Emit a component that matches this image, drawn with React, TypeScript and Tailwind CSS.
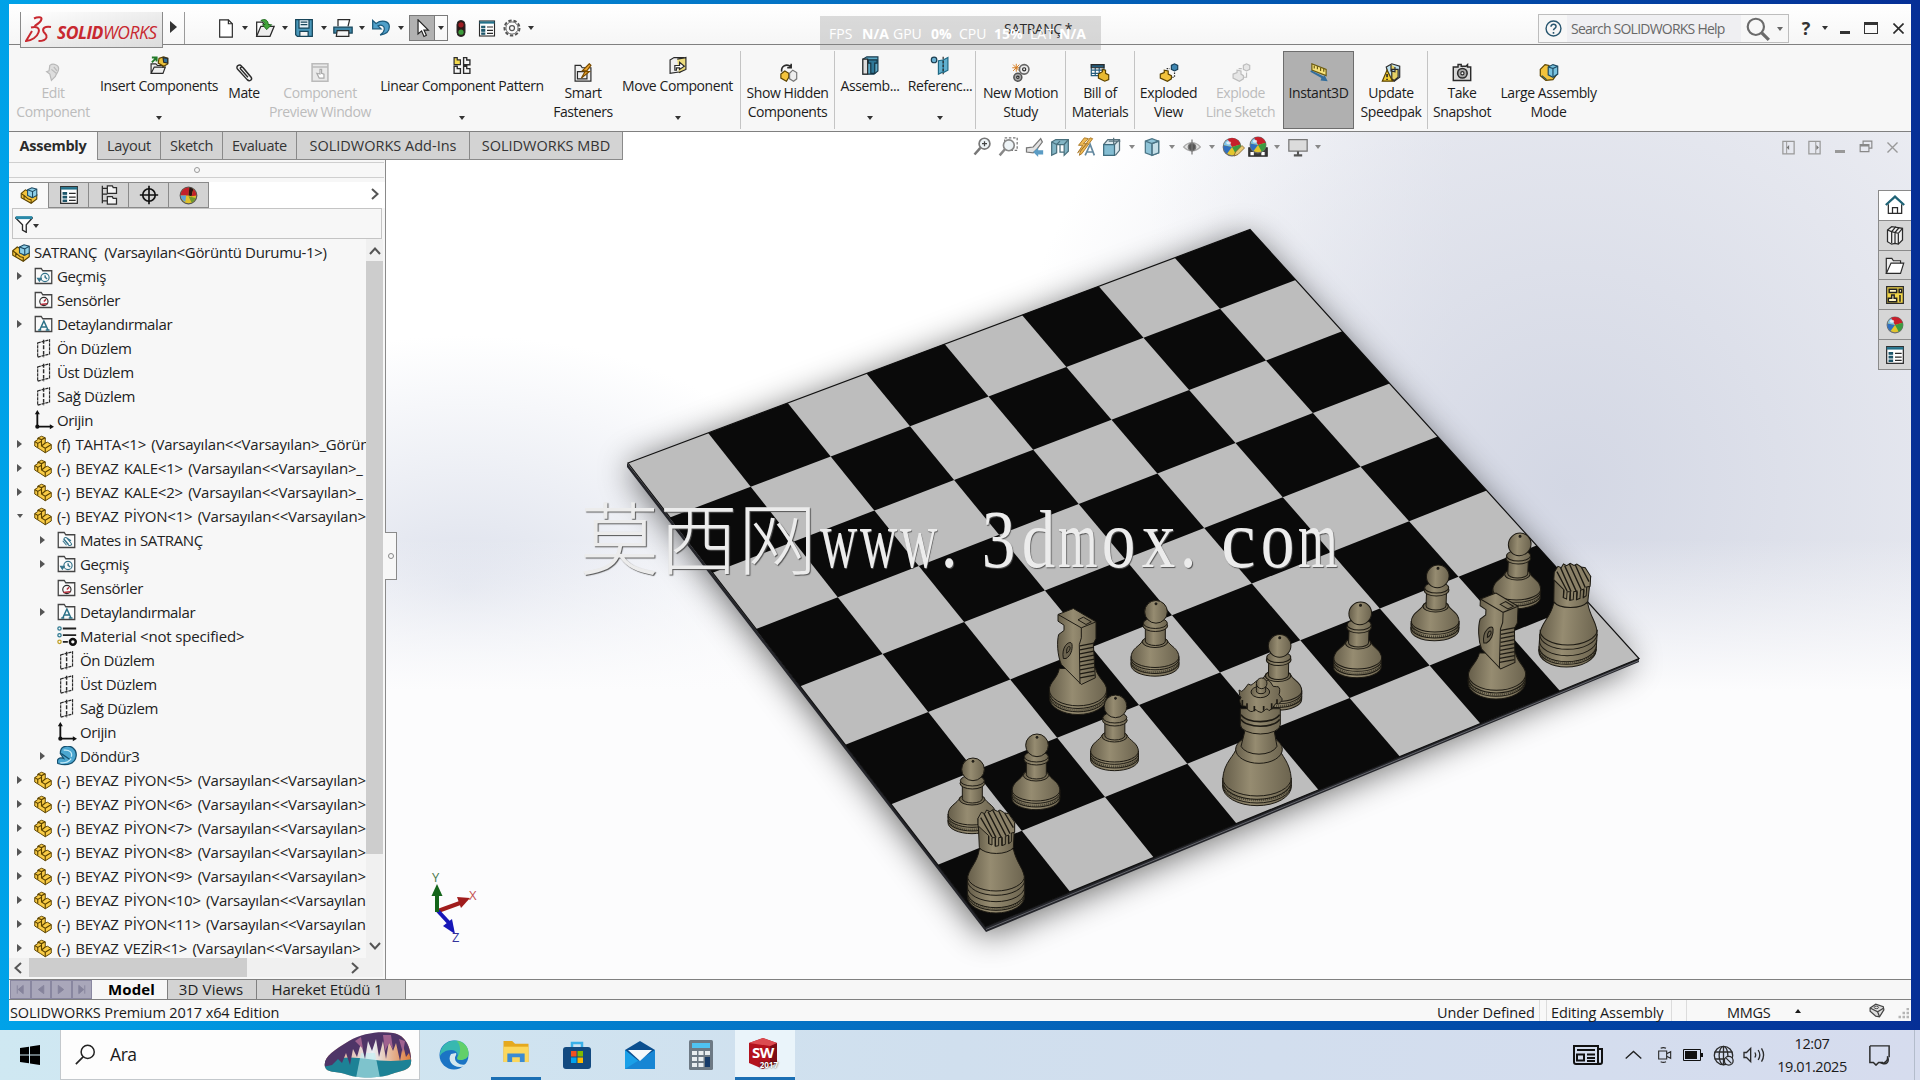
import type { ReactNode } from "react";
import clsx from "clsx";

type Pt = [number, number];

const Svg = ({ children, className = "size-5", box = "0 0 24 24" }: { children: ReactNode; className?: string; box?: string }) => (
  <svg viewBox={box} className={clsx("shrink-0", className)} fill="none" stroke="#2b2b2b" strokeWidth="1.5">
    {children}
  </svg>
);

const Caret = ({ className = "text-[#333]" }: { className?: string }) => (
  <svg viewBox="0 0 6 4" className={clsx("h-1 w-1.5 shrink-0", className)}>
    <path d="M0 0h6L3 4z" fill="currentColor" />
  </svg>
);

/* ---------- small icons ---------- */

const PartIcon = () => (
  <Svg className="h-[19px] w-[18px]">
    <path d="M1 8l4-2.500V3.500L10 1l5 2v7l3-1 5 3v6l-8 5-6-4-8-5z" fill="#f9cb45" stroke="#5b4300" strokeWidth="1.300" />
    <path d="M1 8l4 2.500 5-3V5.500L5 3.500M10 5.500L15 3M10 8v6l5 3v6M15 17l8-5M10 14l5-4M5 10.500V16" stroke="#5b4300" />
  </Svg>
);

const AssemblyIcon = ({ className }: { className?: string }) => (
  <Svg className={className}>
    <path d="M1 9l6-5 4 2v5l5 4 7-4v6l-8 6-14-8z" fill="#f3c33c" stroke="#5b4300" />
    <path d="M1 9l4 3v5M5 12l6 5 4 1v5" stroke="#5b4300" />
    <path d="M10 4l6-3 7 2v9l-6 3-7-3z" fill="#8ecfe8" stroke="#1d4a63" />
    <path d="M10 4l7 2.500V15M17 6.500L23 3" stroke="#1d4a63" />
  </Svg>
);

const FolderFrame = ({ children }: { children: ReactNode }) => (
  <Svg className="h-[18px] w-[19px]">
    <path d="M1 22V2h8l2 3h12v17z" fill="#fafafa" stroke="#444" strokeWidth="1.700" />
    {children}
  </Svg>
);

const HistoryIcon = () => (
  <FolderFrame>
    <circle cx="14" cy="14" r="5.500" stroke="#33738a" />
    <path d="M4 15h5l-2.500 4zM14 11v3l3 2" fill="#33738a" stroke="#33738a" />
  </FolderFrame>
);
const SensorIcon = () => (
  <FolderFrame>
    <circle cx="12.500" cy="14" r="5.500" />
    <path d="M12.500 14l3-3M8 18l9-1" stroke="#b22d3a" strokeWidth="2" />
  </FolderFrame>
);
const NotesIcon = () => (
  <FolderFrame>
    <path d="M7 20l5.500-12L18 20M9 16h7M5 20h4M15 20h5" stroke="#2b7187" strokeWidth="2" />
  </FolderFrame>
);
const MatesIcon = () => (
  <FolderFrame>
    <path d="M8 11l7 8c3 1 5-1 3-3l-6-7c-2-1-4 1-3 2l6 7M7 13l5 6M12 9l6 4" stroke="#33738a" strokeWidth="1.400" />
  </FolderFrame>
);
const PlaneIcon = () => (
  <Svg className="h-[19px] w-5">
    <path d="M4 5l15-4v18L4 23z" strokeDasharray="4 1" />
    <path d="M11.500 1v22" strokeDasharray="5 2" strokeWidth="1.800" />
  </Svg>
);
const OriginIcon = () => (
  <Svg>
    <path d="M4 3v17h17" strokeWidth="2.200" stroke="#111" />
    <path d="M4 0l3 5H1zM24 20l-5 3v-6z" fill="#111" stroke="none" />
    <circle cx="4" cy="20" r="2.500" fill="#111" stroke="none" />
  </Svg>
);
const MaterialIcon = () => (
  <Svg>
    <circle cx="3" cy="3" r="2" stroke="#2c7890" />
    <circle cx="3" cy="11" r="2" stroke="#2c7890" />
    <circle cx="3" cy="19" r="2" stroke="#c2a025" />
    <path d="M7 3h16M7 11h16M7 19h6" stroke="#222" strokeWidth="2.200" />
    <circle cx="19" cy="19" r="3.500" strokeWidth="3" stroke="#111" />
  </Svg>
);
const RevolveIcon = () => (
  <Svg>
    <path d="M8 1c9-3 16 3 15 11S14 25 1 21c-2-5 2-8 7-6L4 9c0-4 1-7 4-8z" fill="#4ba6d0" stroke="#15506f" />
    <path d="M8 5c7-1 11 3 9 8M4 20c6 1 10-1 13-5" stroke="#c6ebf8" />
    <path d="M5 9l10 7" stroke="#15506f" />
  </Svg>
);

const BallIcon = ({ className = "size-5" }: { className?: string }) => (
  <Svg className={className}>
    <circle cx="12" cy="12" r="10.500" fill="#e3c62d" stroke="#6e6e6e" />
    <path d="M12 12L6 3.500A10 10 0 0 1 22 9z" fill="#c8202c" stroke="none" />
    <path d="M12 12L2 9.500A10 10 0 0 1 7 3z" fill="#7fc4e8" stroke="none" />
    <path d="M12 12l10-3a10 10 0 0 1-5 12z" fill="#3c9b42" stroke="none" />
    <path d="M12 12L2 10a10 10 0 0 0 4 10z" fill="#2f6fc0" stroke="none" />
    <ellipse cx="8" cy="7" rx="3" ry="2" fill="#fff" opacity=".7" stroke="none" />
  </Svg>
);

// Property-manager flavour of the ball: red top, yellow base, dark wedge.
const DisplayBall = () => (
  <Svg className="size-[19px]">
    <circle cx="12" cy="12" r="10.500" fill="#e0c12b" stroke="#555" />
    <path d="M12 12L2 12A10 10 0 0 1 13 2z" fill="#c2202a" stroke="none" />
    <path d="M13 2a10 10 0 0 1 5 2l-2 9-4-1z" fill="#2b1414" stroke="none" />
    <path d="M18 4a10 10 0 0 1 4 8l-6 1z" fill="#c2202a" stroke="none" />
    <path d="M2 12h7l-1 8a10 10 0 0 1-6-8z" fill="#5aa3d6" stroke="none" />
    <path d="M12 13l9 2a10 10 0 0 1-5 6z" fill="#6f9a2f" stroke="none" />
  </Svg>
);

const ListIcon = ({ className = "size-5" }: { className?: string }) => (
  <Svg className={className}>
    <rect x="2" y="2" width="20" height="20" fill="#fff" />
    <path d="M2 4h20" stroke="#23718a" strokeWidth="3" />
    <path d="M5 9h4v2H5zM5 13.500h4v2H5zM5 18h4v1.500H5z" fill="#23718a" stroke="#1d5468" />
    <path d="M12 10h8M12 14.500h8M12 18.500h8" />
  </Svg>
);

const TreeIcon = () => (
  <Svg>
    <path d="M4 1v21M4 4h6M4 19h6M4 11h6" />
    <path d="M10 1h6l1 2h4v7h-11zM10 14h6l1 2h4v7H10z" fill="#f4f4f4" />
  </Svg>
);
const TargetIcon = () => (
  <Svg>
    <circle cx="12" cy="12" r="7.500" strokeWidth="2" stroke="#111" />
    <path d="M12 1v22M1 12h22" strokeWidth="2" stroke="#111" />
  </Svg>
);

const Magnifier = ({ className, color = "#555" }: { className?: string; color?: string }) => (
  <Svg className={className}>
    <circle cx="10" cy="10" r="7.500" stroke={color} strokeWidth="2" />
    <path d="M15.500 15.500L22 22" stroke={color} strokeWidth="3" />
  </Svg>
);

/* ---------- title bar ---------- */

const NewDoc = () => (
  <Svg className="h-[19px] w-5">
    <path d="M4 1h11l5 5v17H4z" fill="#fff" />
    <path d="M15 1v5h5" />
  </Svg>
);
const OpenDoc = () => (
  <Svg>
    <path d="M2 22V5h7l2 3h6v3" fill="#fff" />
    <path d="M2 22L7 10h16l-5 12z" fill="#eee" />
    <path d="M7 3c5-3 9 0 9 5h4l-6 6-5-6h3c0-3-2-4-5-5z" fill="#43a63b" stroke="#1c651b" strokeWidth="1" />
  </Svg>
);
const SaveDoc = () => (
  <Svg>
    <path d="M2 2h20v20H4l-2-2z" fill="#4a98bb" stroke="#17455a" />
    <path d="M6 2h12v10H6z" fill="#e8f3f8" stroke="#17455a" />
    <path d="M8 5h8M8 8h8" stroke="#17455a" />
    <path d="M7 16h10v6H7z" fill="#f4f4f4" stroke="#17455a" />
  </Svg>
);
const PrintDoc = () => (
  <Svg>
    <path d="M6 10V2h14l-2 8" fill="#fff" />
    <path d="M1 11h22v7H1z" fill="#3f87a8" stroke="#17455a" />
    <path d="M5 15h14v7H4z" fill="#f6f6f6" />
  </Svg>
);
const UndoIcon = () => (
  <Svg>
    <path d="M2 3v10h10L8.500 9.500c4-2 8 0 7.500 4-.3 3-2 5-5 7 7-1 11-5 11-10 0-7-9-9-16-4z" fill="#4f9fc9" stroke="#1c5a7c" />
  </Svg>
);
const TrafficIcon = () => (
  <Svg className="h-[19px] w-4">
    <rect x="6" y="0" width="12" height="24" rx="6" fill="#2a1717" />
    <circle cx="12" cy="6.500" r="4" fill="#9b1c22" stroke="none" />
    <circle cx="12" cy="17.500" r="4" fill="#3b9c3b" stroke="none" />
  </Svg>
);
const GearIcon = () => (
  <Svg>
    <circle cx="12" cy="12" r="9" strokeDasharray="4 2.280" strokeWidth="2.400" stroke="#555" />
    <circle cx="12" cy="12" r="7.300" stroke="#555" strokeWidth="1" />
    <circle cx="12" cy="12" r="3" stroke="#555" />
  </Svg>
);

const Logo = () => (
  <div className="flex h-9 w-[143px] items-center self-start border-x border-b border-[#8a8a8a] bg-linear-to-br from-white to-[#dcdcdc] pl-1">
    <svg viewBox="0 0 27 27" className="h-[27px] w-[27px] shrink-0" fill="none" stroke="#c8282f" strokeWidth="2">
      <path d="M9 2.500c4-2 8-1.500 7.500.5C16 6 13 8 9.500 10" />
      <path d="M6 11.500c6-1.500 9 .5 7.500 5C12 21 7 24.500 1 25L7 15" />
      <path d="M26 11c-6-1-9 1-7.500 4.500 1 2 4 3 3 6-.8 2.500-4 3.500-8 3.500" />
    </svg>
    <span className="mt-[5px] ml-[5px] text-[17.5px] tracking-[-0.03em] text-[#c8282f] italic">
      <b>SOLID</b>WORKS
    </span>
  </div>
);

const Cell = ({ w, children, className }: { w: string; children?: ReactNode; className?: string }) => (
  <div className={clsx("flex shrink-0 items-center justify-center", w, className)}>{children}</div>
);

const TitleBar = () => (
  <div className="relative flex h-[41px] shrink-0 items-center border-b border-[#808080] bg-linear-to-b from-white to-[#f6f6f6] pt-2">
    <div className="ml-[11px] flex h-full items-center">
      <Logo />
      <Cell w="w-[22px]" className="h-full border-r border-[#9a9a9a] pb-0.5">
        <svg viewBox="0 0 7 12" className="h-3 w-[7px]"><path d="M0 0l7 6-7 6z" fill="#333" /></svg>
      </Cell>
    </div>
    <div className="ml-[31px] flex h-[26px] items-center self-start pt-1.5">
      <Cell w="w-5"><NewDoc /></Cell>
      <Cell w="w-[18px]"><Caret /></Cell>
      <Cell w="w-[22px]"><OpenDoc /></Cell>
      <Cell w="w-[17px]"><Caret /></Cell>
      <Cell w="w-[22px]"><SaveDoc /></Cell>
      <Cell w="w-[17px]"><Caret /></Cell>
      <Cell w="w-[22px]"><PrintDoc /></Cell>
      <Cell w="w-4"><Caret /></Cell>
      <Cell w="w-[22px]"><UndoIcon /></Cell>
      <Cell w="w-[17px]"><Caret /></Cell>
      <Cell w="w-[26px]" className="h-[26px] border border-[#7b7b7b] bg-[#b1b1b1]">
        <Svg className="h-[19px] w-5"><path d="M7 1v18l4.500-4 3 7 3-1.500-3-6.500h5.500z" fill="#fff" stroke="#222" /></Svg>
      </Cell>
      <Cell w="w-[13px]" className="h-[26px] border-y border-r border-[#7b7b7b]"><Caret /></Cell>
      <Cell w="w-[26px]"><TrafficIcon /></Cell>
      <Cell w="w-[26px]"><ListIcon className="h-[19px] w-[18px]" /></Cell>
      <Cell w="w-6"><GearIcon /></Cell>
      <Cell w="w-[14px]"><Caret /></Cell>
    </div>
    <span className="ml-[466px] text-[14px] tracking-[-0.035em] whitespace-nowrap text-black">SATRANÇ *</span>
    <div className="absolute top-3 left-[811px] flex h-[34px] w-[281px] items-center bg-[#8c8c8c]/30 pl-[9px] text-[14px] whitespace-nowrap text-white">
      <span className="w-[33px]">FPS</span>
      <b className="w-[31px]">N/A</b>
      <span className="w-[38px]">GPU</span>
      <b className="w-[28px]">0%</b>
      <span className="w-[35px]">CPU</span>
      <b className="w-[36px]">15%</b>
      <span className="w-[29px]">LAT</span>
      <b>N/A</b>
    </div>
    <div className="mt-[2px] mr-[6px] ml-auto flex h-[29px] w-[251px] items-center self-start border border-[#bdbdbd] bg-[#f7f7f7]">
      <Cell w="w-[28px]">
        <Svg className="size-[17px]">
          <circle cx="12" cy="12" r="10.500" stroke="#28566f" strokeWidth="2" />
          <path d="M8.500 9.500c0-5 7.500-4.500 7 0-.3 2.500-3.500 2-3.500 5M12 17v2.500" stroke="#28566f" strokeWidth="2.200" />
        </Svg>
      </Cell>
      <span className="flex h-full w-[174px] items-center bg-[#efeff2] pl-1 text-[14px] tracking-[-0.055em] whitespace-nowrap text-[#686868]">Search SOLIDWORKS Help</span>
      <Cell w="w-[34px]"><Magnifier className="size-[26px]" color="#6b6b6b" /></Cell>
      <Caret className="ml-0.5 text-[#666]" />
    </div>
    <div className="flex h-[29px] items-center">
      <Cell w="w-[22px]" className="text-[18px] font-bold text-[#333]">?</Cell>
      <Cell w="w-4"><Caret /></Cell>
      <Cell w="w-6" className="pt-2"><i className="h-[3px] w-[10px] bg-[#333]" /></Cell>
      <Cell w="w-[28px]"><i className="h-3 w-[14px] border border-t-3 border-[#333]" /></Cell>
      <Cell w="w-[26px]"><Svg className="size-[11px]"><path d="M1 1l22 22M23 1L1 23" strokeWidth="3.500" /></Svg></Cell>
    </div>
  </div>
);

/* ---------- ribbon ---------- */

const ribbonIcons: Record<string, ReactNode> = {
  edit: <path d="M8 3c4-3 12-1 11 5 0 4-3 5-4 9l-5 5-2-8-4-3 3-1zM10 8l6 5M13 5l4 5" fill="#ddd" stroke="#b9b9b9" />,
  insert: (
    <>
      <path d="M2 22V10h6l2 2h7v3M2 22l4-8h14l-3 8z" fill="#eee" />
      <path d="M3 8l5-5M3 2h6v5" stroke="#227a2a" strokeWidth="2.500" />
      <path d="M12 3l6-2 5 2v7l-5 3-7-4z" fill="#eac03a" stroke="#5b4300" />
      <path d="M17 2l6 1v6l-5-1z" fill="#2e6f9a" />
    </>
  ),
  mate: <path d="M19 16L9 4C6 1 1 4 4 8l12 13c3 3 7 0 5-3L11 6C9 4 6 6 8 8l9 10" strokeWidth="1.800" />,
  preview: (
    <>
      <path d="M2 1h20v22H2zM2 5h20" fill="#e9e9e9" stroke="#bbb" strokeWidth="2" />
      <path d="M12 8v6l-4-1 3 6h6v-5l-3-1V8z" fill="#fff" stroke="#aaa" />
    </>
  ),
  linear: (
    <>
      <path d="M2 2h4v3h4v6H2z" fill="#f3d94e" stroke="#2b2b2b" />
      <path d="M14 2h4v3h4v6h-8zM2 13h4v3h4v6H2zM14 13h4v3h4v6h-8z" strokeWidth="1.700" />
    </>
  ),
  smart: (
    <>
      <path d="M2 3h7l2 3h11v17H2zM5 11h12v9H5z" fill="#f1f1f1" />
      <path d="M20 1l-9 9h4l-5 9 10-8h-4l6-8z" fill="#f2a92f" stroke="#7a4c00" />
    </>
  ),
  move: (
    <>
      <path d="M2 5l5-3h12v5l-4 13-13 2z" fill="#eee" />
      <path d="M11 4l11-2v15l-9 4" fill="#eddc7d" />
      <path d="M8 18v-6h6V8l6 5-6 4v-2h-4v3z" fill="#fff" />
    </>
  ),
  hidden: (
    <>
      <path d="M4 11c-1-7 6-11 12-6M16 1v5h-5" strokeWidth="2" />
      <path d="M3 14l5-4 5 3v5l-3 5-7-4z" fill="#f3c33c" stroke="#5b4300" />
      <path d="M14 13l4-4 5 3v8l-4 3-5-3z" fill="#eee" stroke="#777" />
    </>
  ),
  feature: (
    <>
      <path d="M3 4l5-3h14v18l-5 4H3z" fill="#5ca9c7" stroke="#1c3e50" />
      <path d="M3 4h6v19H3z" fill="#ddd" />
      <path d="M10 5h11v4h-3v13h-5V9h-3z" fill="#2f7797" stroke="#143443" />
    </>
  ),
  reference: (
    <>
      <circle cx="4.500" cy="5" r="3.500" fill="#6cb2d4" stroke="#1c3e50" />
      <path d="M10 6l6-1v15l-6 3zM16 5l6-3v16l-6 3" fill="#61b0cf" stroke="#1f6985" />
      <path d="M16 1v22" strokeDasharray="3 2" />
    </>
  ),
  motion: (
    <>
      <path d="M6 1v10M1 6h10M2 2l8 8M10 2l-8 8" stroke="#d57a1d" strokeWidth="1.200" />
      <circle cx="16" cy="8" r="6" fill="#ececec" stroke="#666" strokeWidth="2" />
      <circle cx="16" cy="8" r="2" />
      <circle cx="8" cy="18" r="5" fill="#aaa" stroke="#555" strokeWidth="2" />
      <circle cx="8" cy="18" r="1.500" fill="#fff" />
    </>
  ),
  bom: (
    <>
      <path d="M1 2h16v14H1zM1 9h16M1 13h16M6 6v10M11 6v10" fill="#fff" stroke="#245c7c" />
      <path d="M1 2h16v4H1z" fill="#245c7c" />
      <path d="M10 14l5-3V8l4 1v4l4 2v6l-5 2-8-4z" fill="#e8b931" stroke="#5b4300" />
    </>
  ),
  exploded: (
    <>
      <path d="M1 14l5-2V9l5 1v4l4 2v4l-5 3-9-4z" fill="#f3c33c" stroke="#5b4300" />
      <path d="M15 3l4-2 4 2v5l-4 2-4-2z" fill="#3f86b1" stroke="#173f58" />
      <path d="M19 12v6h-4M9 7h4" strokeDasharray="2 1.500" />
    </>
  ),
  explodeLine: (
    <>
      <path d="M2 14l5-2V9l5 1v4l3 2v4l-5 3-8-4zM15 3l4-2 4 2v5l-4 2-4-2z" fill="#e6e6e6" stroke="#bdbdbd" />
      <path d="M19 12v6h-4M9 7h4" stroke="#bdbdbd" />
    </>
  ),
  instant: (
    <>
      <path d="M3 1l18 7v8L3 9z" fill="#f7e27a" stroke="#6b5b12" />
      <path d="M6 3v4M10 4v4M14 6v4M18 7v4" stroke="#6b5b12" />
      <path d="M1 11l14 8-1 3 9 1-4-8-1 2L2 9z" fill="#336e9c" stroke="none" />
    </>
  ),
  speedpak: (
    <>
      <path d="M6 5l7-4 10 3v14l-7 5-6-3z" fill="#bfe1ef" />
      <path d="M13 8h8v10l-5 4-3-2zM12 2v8l5 1V5" fill="#e6d165" />
      <path d="M7 9l7 14H1z" fill="#f5d032" stroke="#5b4300" />
      <path d="M7 14v4M7 20v1.500" stroke="#222" strokeWidth="2" />
    </>
  ),
  snapshot: (
    <>
      <path d="M1 5h6V2h4v2h6l2-2v3h4v17H1z" fill="#d9d9d9" strokeWidth="1.800" />
      <circle cx="12.500" cy="13" r="6" fill="#aaa" strokeWidth="2" />
      <circle cx="12.500" cy="13" r="2" fill="#fff" />
    </>
  ),
  large: (
    <>
      <path d="M1 8l6-6 5 1v9l10 2-5 7-9 1-7-6z" fill="#f3c33c" stroke="#5b4300" />
      <path d="M11 5l6-3 6 2v10l-6 4-6-3z" fill="#79c3df" stroke="#1d4a63" />
      <path d="M11 5l6 2v10M17 7l6-3M3 16l6 5" stroke="#1d4a63" />
    </>
  ),
};

type Tool = { w: string; icon: string; lines: string[]; menu?: boolean; off?: boolean; sep?: boolean; active?: boolean };

const tools: Tool[] = [
  { w: "w-[88px]", icon: "edit", lines: ["Edit", "Component"], off: true },
  { w: "w-[124px]", icon: "insert", lines: ["Insert Components"], menu: true },
  { w: "w-[46px]", icon: "mate", lines: ["Mate"] },
  { w: "w-[106px]", icon: "preview", lines: ["Component", "Preview Window"], off: true },
  { w: "w-[178px]", icon: "linear", lines: ["Linear Component Pattern"], menu: true },
  { w: "w-16", icon: "smart", lines: ["Smart", "Fasteners"] },
  { w: "w-[125px]", icon: "move", lines: ["Move Component"], menu: true },
  { w: "w-[94px]", icon: "hidden", lines: ["Show Hidden", "Components"], sep: true },
  { w: "w-[71px]", icon: "feature", lines: ["Assemb..."], menu: true, sep: true },
  { w: "w-[70px]", icon: "reference", lines: ["Referenc..."], menu: true },
  { w: "w-[90px]", icon: "motion", lines: ["New Motion", "Study"], sep: true },
  { w: "w-[69px]", icon: "bom", lines: ["Bill of", "Materials"], sep: true },
  { w: "w-[68px]", icon: "exploded", lines: ["Exploded", "View"], sep: true },
  { w: "w-[77px]", icon: "explodeLine", lines: ["Explode", "Line Sketch"], off: true },
  { w: "ml-1 w-[71px]", icon: "instant", lines: ["Instant3D"], active: true },
  { w: "ml-px w-[72px]", icon: "speedpak", lines: ["Update", "Speedpak"] },
  { w: "w-[69px]", icon: "snapshot", lines: ["Take", "Snapshot"], sep: true },
  { w: "w-[105px]", icon: "large", lines: ["Large Assembly", "Mode"] },
];

const Ribbon = () => (
  <div className="flex h-[87px] shrink-0 border-b border-[#808080] bg-[#f7f7f7] pt-[6px] pb-[2px]">
    {tools.map((t) => (
      <div
        key={t.icon}
        className={clsx(
          "flex shrink-0 flex-col items-center",
          t.w,
          t.menu ? "pt-[5px]" : "pt-3",
          t.sep && "border-l border-[#c4c4c4]",
          t.active && "bg-[#b0b0b0] outline -outline-offset-1 outline-[#6d6d6d]",
        )}
      >
        <Svg className="h-[19px] w-5">{ribbonIcons[t.icon]}</Svg>
        <div className={clsx("mt-px flex flex-col items-center text-[14px] leading-[19px] tracking-[-0.03em] whitespace-nowrap", t.off ? "text-[#bcbcbc]" : "text-[#1c1c1c]")}>
          {t.lines.map((l) => (
            <span key={l}>{l}</span>
          ))}
        </div>
        {t.menu && <div className="mt-[21px]"><Caret /></div>}
      </div>
    ))}
  </div>
);

/* ---------- command tabs and heads-up toolbar ---------- */

const commandTabs: [string, string][] = [
  ["Assembly", "w-[88px]"],
  ["Layout", "w-[64px]"],
  ["Sketch", "w-[62px]"],
  ["Evaluate", "w-[74px]"],
  ["SOLIDWORKS Add-Ins", "w-[173px]"],
  ["SOLIDWORKS MBD", "w-[153px]"],
];

const Cube = () => (
  <Svg>
    <path d="M4 5l8-3 8 3v14l-8 3-8-3z" fill="#8fc4d8" stroke="#4b7586" />
    <path d="M12 8l8-3v14l-8 3z" fill="#c4dfe8" stroke="#4b7586" />
    <path d="M4 5l8 3 8-3M12 8v14" stroke="#4b7586" />
  </Svg>
);

const HeadsUp = () => (
  <div className="flex grow items-center pt-0.5">
    <div className="ml-[346px] flex items-center">
      <Cell w="w-[26px]"><Svg><circle cx="15" cy="8" r="6.500" fill="#eef4f7" stroke="#777" strokeWidth="2" /><path d="M10 13l-7 8" stroke="#777" strokeWidth="3" /><path d="M15 5v6M12 8h6" stroke="#444" /></Svg></Cell>
      <Cell w="w-[26px]"><Svg><path d="M8 1h15v15H8z" strokeDasharray="3 2" stroke="#777" /><circle cx="13" cy="10" r="6.500" fill="#eef4f7" stroke="#888" strokeWidth="2" /><path d="M8 15l-6 7" stroke="#888" strokeWidth="3" /></Svg></Cell>
      <Cell w="w-[26px]"><Svg><path d="M20 2l-9 10-8 1v5l8 1 5-5 6-8z" fill="#e3e3e3" stroke="#777" /><path d="M11 18l6-5v3h6v5h-6v3z" fill="#5b9cc4" stroke="none" /></Svg></Cell>
      <Cell w="w-[26px]"><Svg><path d="M2 6l5-3h15v14l-5 5V9H8v10l-6 3z" fill="#83b5c5" stroke="#49707d" /><path d="M2 6l6 3M8 9l4-4M17 9l5-6M12 9v9h5" stroke="#49707d" /></Svg></Cell>
      <Cell w="w-[26px]"><Svg><path d="M10 1L3 10h5l-6 9 12-11H9l6-6zM20 2L7 20l-3 2 1-4L17 1z" fill="#f0bb55" stroke="#a06c1b" strokeWidth="1" /><path d="M11 22l6-13 5 13M13 18h8" stroke="#6489a0" strokeWidth="2" /></Svg></Cell>
      <Cell w="w-[25px]"><Svg><path d="M2 9l5-6h14v13l-5 6" fill="#dbe9ee" stroke="#56717c" /><path d="M2 9h13v13H2z" fill="#84bdd2" stroke="#3e6c7e" /><path d="M15 9l6-6M14 1v8M8 5h14" stroke="#56717c" /></Svg></Cell>
      <Cell w="w-[15px]"><Caret className="text-[#888]" /></Cell>
      <Cell w="w-[26px]"><Cube /></Cell>
      <Cell w="w-[14px]"><Caret className="text-[#888]" /></Cell>
      <Cell w="w-[26px]"><Svg><path d="M2 12c6-7 14-7 20 0-6 6-14 6-20 0z" fill="#e4e4e4" stroke="#aaa" /><circle cx="12" cy="12" r="4.500" fill="#555" stroke="#777" /><path d="M12 3v18" stroke="#777" /></Svg></Cell>
      <Cell w="w-[14px]"><Caret className="text-[#888]" /></Cell>
      <Cell w="w-[26px]" className="relative">
        <BallIcon />
        <Svg className="absolute right-0 bottom-0 size-3"><path d="M2 22l3-8L18 1l5 5L10 19z" fill="#e8ca74" stroke="#7a5a22" /></Svg>
      </Cell>
      <Cell w="w-[26px]" className="relative">
        <Svg><path d="M1 13h22v10H1z" fill="#3c3c3c" /><path d="M3 18h4v4H3zM16 18h4v4h-4z" fill="#fff" stroke="none" /></Svg>
        <div className="absolute -top-px"><BallIcon className="size-[18px]" /></div>
      </Cell>
      <Cell w="w-3"><Caret className="text-[#888]" /></Cell>
      <Cell w="w-[29px]"><Svg><path d="M1 3h22v14H1z" fill="#dcdcdc" stroke="#777" /><path d="M12 17v4M7 22h10" stroke="#555" strokeWidth="2.500" /></Svg></Cell>
      <Cell w="w-3"><Caret className="text-[#888]" /></Cell>
    </div>
    <div className="mr-[6px] ml-auto flex items-center">
      <Cell w="w-[26px]"><Svg className="size-[15px]"><path d="M3 2h18v20H3z" stroke="#999" strokeWidth="2" /><path d="M9 2v20" stroke="#999" /><path d="M13 8v8l-4-4z" fill="#777" stroke="none" /></Svg></Cell>
      <Cell w="w-[26px]"><Svg className="size-[15px]"><path d="M3 2h18v20H3z" stroke="#999" strokeWidth="2" /><path d="M14 2v20" stroke="#999" /><path d="M15 8v8l4-4z" fill="#777" stroke="none" /></Svg></Cell>
      <Cell w="w-[26px]" className="pt-2"><i className="h-[3px] w-[10px] bg-[#999]" /></Cell>
      <Cell w="w-[26px]"><Svg className="size-[14px]"><path d="M7 7V2h15v12h-5M2 8h15v12H2zM2 10h15" stroke="#888" strokeWidth="2" /></Svg></Cell>
      <Cell w="w-[26px]"><Svg className="size-[11px]"><path d="M1 1l22 22M23 1L1 23" stroke="#999" strokeWidth="3" /></Svg></Cell>
    </div>
  </div>
);

const TabRow = () => (
  <div className="relative flex h-[28px] shrink-0">
    {commandTabs.map(([label, w], i) => (
      <div
        key={label}
        className={clsx(
          "flex shrink-0 items-center justify-center text-[14.5px] whitespace-nowrap",
          w,
          i === 0 ? "bg-[#f7f7f7] font-bold text-[#2b2b2b]" : "border-r border-b border-[#8a8a8a] bg-[#d3d3d3] text-[#333]",
          i > 3 ? "tracking-[0]" : "tracking-[-0.02em]",
          i === 1 && "border-l",
        )}
      >
        {label}
      </div>
    ))}
    <HeadsUp />
  </div>
);

/* ---------- feature tree ---------- */

type Row = { text: string; icon: ReactNode; depth: number; state?: "closed" | "open" };

const part = (text: string, state: "closed" | "open" = "closed"): Row => ({ text, icon: <PartIcon />, depth: 1, state });

const folderRows = (depth: number): Row[] => [
  { text: "Geçmiş", icon: <HistoryIcon />, depth, state: "closed" },
  { text: "Sensörler", icon: <SensorIcon />, depth },
  { text: "Detaylandırmalar", icon: <NotesIcon />, depth, state: "closed" },
];

const planeRows = (depth: number): Row[] => [
  { text: "Ön Düzlem", icon: <PlaneIcon />, depth },
  { text: "Üst Düzlem", icon: <PlaneIcon />, depth },
  { text: "Sağ Düzlem", icon: <PlaneIcon />, depth },
  { text: "Orijin", icon: <OriginIcon />, depth },
];

const rows: Row[] = [
  ...folderRows(1),
  ...planeRows(1),
  part("(f) TAHTA<1> (Varsayılan<<Varsayılan>_Görün"),
  part("(-) BEYAZ KALE<1> (Varsayılan<<Varsayılan>_"),
  part("(-) BEYAZ KALE<2> (Varsayılan<<Varsayılan>_"),
  part("(-) BEYAZ PİYON<1> (Varsayılan<<Varsayılan>", "open"),
  { text: "Mates in SATRANÇ", icon: <MatesIcon />, depth: 2, state: "closed" },
  ...folderRows(2),
  { text: "Material <not specified>", icon: <MaterialIcon />, depth: 2 },
  ...planeRows(2),
  { text: "Döndür3", icon: <RevolveIcon />, depth: 2, state: "closed" },
  ...[5, 6, 7, 8, 9].map((n) => part(`(-) BEYAZ PİYON<${n}> (Varsayılan<<Varsayılan>`)),
  part("(-) BEYAZ PİYON<10> (Varsayılan<<Varsayılan"),
  part("(-) BEYAZ PİYON<11> (Varsayılan<<Varsayılan"),
  part("(-) BEYAZ VEZİR<1> (Varsayılan<<Varsayılan>"),
];

const Chevron = ({ className }: { className?: string }) => (
  <Svg className={clsx("size-3", className)}>
    <path d="M6 2l11 10L6 22" stroke="#555" strokeWidth="4" />
  </Svg>
);

const panelTabs = [
  <AssemblyIcon key="asm" className="h-[17px] w-[18px]" />,
  <ListIcon key="list" />,
  <TreeIcon key="tree" />,
  <TargetIcon key="target" />,
  <DisplayBall key="ball" />,
];

const FeaturePanel = () => (
  <div className="relative flex w-[377px] shrink-0 flex-col border-r border-[#8a8a8a] bg-[#f7f7f7]">
    <div className="mt-[2px] flex h-4 w-[375px] items-center justify-center border-y border-[#cfcfcf]">
      <i className="size-[6px] rounded-full border border-[#999]" />
    </div>
    <div className="mt-1 flex h-[26px] bg-white">
      {panelTabs.map((icon, i) => (
        <div
          key={i}
          className={clsx("flex w-10 items-center justify-center border-t border-r border-[#8a8a8a]", i === 0 ? "bg-[#f9f9f9]" : "border-b bg-[#d3d3d3]")}
        >
          {icon}
        </div>
      ))}
      <Chevron className="mt-1.5 mr-1 ml-auto" />
    </div>
    <div className="ml-[3px] flex h-[31px] w-[370px] items-center border border-[#c4c4c4] pl-0.5">
      <Svg className="h-[18px] w-[18px]">
        <path d="M1 4h22l-8 9v10l-5-3v-7z" fill="#fff" strokeWidth="1.800" />
        <path d="M1 3.500h22" stroke="#2b8aa9" strokeWidth="4" />
      </Svg>
      <div className="mt-1"><Caret /></div>
    </div>
    <div className="flex h-[719px] text-[15px] text-[#222]">
      <div className="w-[357px] overflow-hidden">
        <div className="flex h-[25px] items-center gap-1 pt-0.5 pl-[3px] whitespace-pre">
          <AssemblyIcon className="h-[18px] w-[18px]" />
          <span className="tracking-[-0.022em]">SATRANÇ  (Varsayılan&lt;Görüntü Durumu-1&gt;)</span>
        </div>
        {rows.map((r, i) => (
          <div key={i} className={clsx("flex h-6 items-center whitespace-nowrap", r.depth === 2 ? "pl-[31px]" : "pl-2")}>
            <span className="flex w-[17px] shrink-0 text-[#555]">
              {r.state === "closed" && <svg viewBox="0 0 5 8" className="h-2 w-[5px]"><path d="M0 0l5 4-5 4z" fill="currentColor" /></svg>}
              {r.state === "open" && <Caret className="text-[#555]" />}
            </span>
            <span className="flex w-[23px] shrink-0 items-center">{r.icon}</span>
            <span
              className={clsx(
                r.text.startsWith("(") && "tracking-[-0.014em] [word-spacing:1.5px]",
                r.text.startsWith("Material") && "tracking-[-0.011em]",
                !r.text.includes("<") && "tracking-[-0.026em]",
              )}
            >
              {r.text}
            </span>
          </div>
        ))}
      </div>
      <div className="flex w-[17px] flex-col items-center bg-[#f0f0f0]">
        <Chevron className="mt-1.5 mb-1 -rotate-90" />
        <div className="h-[593px] w-full bg-[#cdcdcd]" />
        <Chevron className="mt-auto mb-1.5 rotate-90" />
      </div>
    </div>
    <div className="flex h-[19px] w-[374px] items-center bg-[#f0f0f0] pl-[3px]">
      <Chevron className="rotate-180" />
      <div className="ml-[5px] h-full w-[218px] bg-[#cdcdcd]" />
      <Chevron className="mr-[22px] ml-auto" />
    </div>
    <div className="absolute top-[372px] left-[376px] flex h-12 w-3 items-center justify-center border border-l-0 border-[#8a8a8a] bg-[#f7f7f7]">
      <i className="size-[6px] rounded-full border border-[#888]" />
    </div>
  </div>
);

/* ---------- 3D scene, drawn in screen coordinates ---------- */

const corners: Pt[] = [[628, 463], [1250, 229.500], [1639, 658.500], [985.500, 926.500]];

// Projects (u, v) in the unit square onto the board's four corners.
const project = (() => {
  const [[x0, y0], [x1, y1], [x2, y2], [x3, y3]] = corners;
  const dx1 = x1 - x2, dx2 = x3 - x2, sx = x0 - x1 + x2 - x3;
  const dy1 = y1 - y2, dy2 = y3 - y2, sy = y0 - y1 + y2 - y3;
  const det = dx1 * dy2 - dx2 * dy1;
  const g = (sx * dy2 - dx2 * sy) / det;
  const h = (dx1 * sy - sx * dy1) / det;
  const a = x1 - x0 + g * x1, b = x3 - x0 + h * x3;
  const d = y1 - y0 + g * y1, e = y3 - y0 + h * y3;
  return (u: number, v: number): Pt => {
    const w = g * u + h * v + 1;
    return [(a * u + b * v + x0) / w, (d * u + e * v + y0) / w];
  };
})();

const toPoints = (pts: Pt[]) => pts.map((p) => p.map((n) => n.toFixed(1)).join(",")).join(" ");

const darkCells = Array.from({ length: 64 }, (_, i): Pt => [i % 8, Math.floor(i / 8)]).filter(([c, r]) => (c + r) % 2 === 1);

const Arcs = ({ rx, ry, ys }: { rx: number; ry: number; ys: number[] }) => (
  <>
    {ys.map((y) => (
      <path key={y} d={`M${-rx} ${y}A${rx} ${ry} 0 0 0 ${rx} ${y}`} fill="none" />
    ))}
  </>
);

const Pawn = () => (
  <>
    <path d="M-72 172C-72 142-44 138-36 118H36C44 138 72 142 72 172V194A72 33 0 0 1-72 194Z" />
    <Arcs rx={72} ry={33} ys={[168, 175, 186]} />
    <path d="M-70 190A72 33 0 0 0 70 190" fill="none" strokeWidth="7" strokeDasharray="3 3" opacity=".6" />
    <ellipse cx="0" cy="124" rx="38" ry="17" />
    <path d="M-29 76V122A30 13 0 0 0 31 122V76Z" />
    <ellipse cx="1" cy="76" rx="37" ry="17" />
    <ellipse cx="1" cy="68" rx="36" ry="16" />
    <circle cx="3" cy="34" r="34" />
    <circle cx="3" cy="10" r="3" fill="#222" />
  </>
);

const Rook = () => (
  <>
    <path d="M-86 215C-86 180-56 165-50 120H52C62 165 86 180 86 215V262A86 50 0 0 1-86 262Z" />
    <Arcs rx={86} ry={46} ys={[200, 213, 232, 250, 258]} />
    <path d="M-84 260A86 50 0 0 0 84 260" fill="none" strokeWidth="6" strokeDasharray="3 3" opacity=".6" />
    <path d="M-54 28L-50 116A54 26 0 0 0 52 116L56 40Z" />
    <path d="M-54 28L-44 10-34 14-28 3-18 8-8 1 4 7 12 3 26 12 38 14 56 40V70L46 72V98L38 104V78L28 82V106L18 110V84L8 86V110L-2 112V86L-12 86V108L-22 104V80L-54 50Z" fill="#8a8067" />
    <path d="M-46 26L-12 84M-36 14L0 86M-24 8L16 86M-10 3L30 80M8 6L42 74M26 12L52 56M-22 82V104M-2 88V112M18 86V110M38 80V104" fill="none" strokeWidth="4" />
  </>
);

const Knight = () => (
  <>
    <path d="M-86 245C-86 220-62 212-56 180H52C62 212 86 222 86 245V268A86 50 0 0 1-86 268Z" />
    <Arcs rx={86} ry={48} ys={[244, 252, 262]} />
    <path d="M-84 266A86 50 0 0 0 84 266" fill="none" strokeWidth="6" strokeDasharray="3 3" opacity=".6" />
    <path d="M-60 18L-14 0 54 40V90L46 106 52 208 10 228-50 168C-62 140-64 100-58 78L-42 66V50L-60 38Z" />
    <path d="M-60 18L10 58 54 40M10 58V88L4 108 6 226M0 34L16 26 40 40 24 48Z" fill="none" />
    <path d="M6 112L48 104M6 124L48 116M6 136L48 128M6 148L48 140M6 160L50 152M6 172L50 164M6 184L50 176M6 196L50 188M6 208L50 200" fill="none" strokeWidth="4" />
    <path d="M-44 150C-52 110-20 92-18 108S-22 142-36 150ZM-34 134C-36 116-26 110-24 116S-28 130-34 134" fill="#6b634f" />
  </>
);

const Queen = () => (
  <>
    <path d="M-103 305C-100 250-66 235-60 205H64C72 235 100 250 103 305V325A103 58 0 0 1-103 325Z" />
    <Arcs rx={103} ry={54} ys={[300, 310, 321]} />
    <path d="M-100 324A103 56 0 0 0 100 324" fill="none" strokeWidth="7" strokeDasharray="3 3" opacity=".6" />
    <ellipse cx="6" cy="214" rx="70" ry="42" />
    <path d="M-34 150L-48 205A56 32 0 0 0 60 205L50 150Z" />
    <path d="M-50 92V140A60 28 0 0 0 70 140V92Z" />
    <path d="M-48 110A60 28 0 0 0 68 110M-48 124A60 28 0 0 0 68 124" fill="none" strokeWidth="5" />
    <path
      strokeLinejoin="round"
      d="M-54 36Q-46 44-40 36T-26 18Q-18 26-10 16T8 8Q16 18 26 10T44 18Q46 28 58 26T68 42Q62 50 72 58T64 78Q56 72 52 82T36 98Q30 88 22 98T2 100Q-2 90-10 98T-30 92Q-30 82-40 84T-52 66Q-44 58-52 52Z"
    />
    <path d="M-44 66V84M-30 76V92M-8 84V100M20 84V98M44 76V94M60 64V78" fill="none" strokeWidth="5" />
    <ellipse cx="10" cy="42" rx="28" ry="17" />
    <path d="M-2 18V38A14 9 0 0 0 26 38V18Z" />
    <circle cx="14" cy="16" r="16" />
  </>
);

type Piece = { x: number; y: number; h: number; lean?: number; shape: ReactNode };

const pieces: Piece[] = [
  { x: 1516, y: 533, h: 220, lean: 2.500, shape: <Pawn /> },
  { x: 1434.500, y: 565, h: 226, lean: 2, shape: <Pawn /> },
  { x: 1357, y: 602, h: 226, lean: 2, shape: <Pawn /> },
  { x: 1155, y: 600.500, h: 226, shape: <Pawn /> },
  { x: 1277.500, y: 634.500, h: 226, lean: 1, shape: <Pawn /> },
  { x: 1078, y: 608.500, h: 320, shape: <Knight /> },
  { x: 1566.500, y: 563, h: 310, lean: 3.500, shape: <Rook /> },
  { x: 1496, y: 593, h: 320, lean: 2.500, shape: <Knight /> },
  { x: 1114.500, y: 695, h: 226, shape: <Pawn /> },
  { x: 1036, y: 734, h: 226, shape: <Pawn /> },
  { x: 972, y: 758, h: 226, shape: <Pawn /> },
  { x: 1257, y: 678, h: 382, shape: <Queen /> },
  { x: 996, y: 809, h: 312, shape: <Rook /> },
];

const Triad = () => (
  <g strokeWidth="4" fontFamily="Open Sans">
    <path d="M438 911L460 903" stroke="#a01c1c" />
    <path d="M470 898L457 897L461 908Z" fill="#a01c1c" />
    <path d="M438 911L450 924" stroke="#1717b8" />
    <path d="M455 934L443 926L452 919Z" fill="#1717b8" />
    <path d="M437 912V894" stroke="#14651a" />
    <path d="M437 884L431.500 896H442.500Z" fill="#14651a" />
    <text x="432" y="882" fontSize="13" fill="#4b7a4d">Y</text>
    <text x="469" y="900" fontSize="13" fill="#c45252">X</text>
    <text x="452" y="942" fontSize="13" fill="#33339c">Z</text>
  </g>
);

const Scene = () => (
  <svg className="absolute inset-0 h-full w-full" viewBox="9 132 1902 847">
    <defs>
      <filter id="soft" x="-20%" y="-20%" width="140%" height="140%"><feGaussianBlur stdDeviation="17" /></filter>
      <linearGradient id="clay" x1="0" x2="1">
        <stop offset="0" stopColor="#665e4a" />
        <stop offset=".4" stopColor="#968c71" />
        <stop offset="1" stopColor="#6c644f" />
      </linearGradient>
    </defs>
    <polygon points="626,468 1248,236 1634,664 985,936" fill="#000" opacity=".6" filter="url(#soft)" />
    <polygon points="627,463 985.5,926 1639,658 1639,662 986,932 627,467" fill="#24252a" />
    <polygon points={toPoints(corners)} fill="#bdbdbd" stroke="#111" strokeWidth="1.200" />
    {darkCells.map(([c, r]) => (
      <polygon
        key={`${c}-${r}`}
        fill="#0a0a0a"
        points={toPoints([project(c / 8, r / 8), project((c + 1) / 8, r / 8), project((c + 1) / 8, (r + 1) / 8), project(c / 8, (r + 1) / 8)])}
      />
    ))}
    <path d="M986 929.500L1639 660.500" stroke="#77797f" strokeWidth=".8" />
    <g fill="url(#clay)" stroke="#1d1a13" strokeWidth="3">
      {pieces.map((p, i) => (
        <g key={i} transform={`translate(${p.x} ${p.y}) scale(.3333) translate(0 ${p.h}) skewX(${-(p.lean ?? 0)}) translate(0 ${-p.h})`}>
          {p.shape}
        </g>
      ))}
    </g>
    <Triad />
  </svg>
);

const narrow: Record<string, string> = { w: "scale-x-[0.63]", m: "scale-x-[0.62]", c: "scale-x-[0.95]" };

const Watermark = () => (
  <div className="pointer-events-none absolute top-[361px] left-[571px] flex h-[84px] text-[#ececec] [text-shadow:1px_1px_1px_#555]">
    <span className="font-['Noto_Sans_CJK_SC',sans-serif] text-[79px] leading-[84px] font-light">莫西网</span>
    <span className="mt-1.5 flex pl-0.5 font-['Liberation_Serif',serif] text-[82px] leading-[82px]">
      {[..."www.3dmox.com"].map((ch, i) => (
        <span key={i} className={clsx("flex w-[39.9px]", ch === "." ? "justify-start" : "justify-center")}>
          <span className={narrow[ch] ?? "scale-x-[0.82]"}>{ch}</span>
        </span>
      ))}
    </span>
  </div>
);

const TaskPane = () => (
  <div className="relative mt-[30px] ml-auto flex h-[180px] w-[33px] flex-col border-t border-l border-[#8a8a8a]">
    {[
      <Svg key="home"><path d="M4 11v11h16V11" fill="#fff" /><path d="M1 12L12 2l11 10" stroke="#1f6376" strokeWidth="2.800" /><path d="M9 22v-7h6v7" /></Svg>,
      <Svg key="lib"><path d="M3 6l5-4 13 2v14l-5 5-4-1-4 1-5-3z" fill="#f0f0f0" /><path d="M3 6l5 2 5-6M8 8v14M8 8l4 1 5-6M12 9v13M12 9l4 1 5-6M16 10v13" /></Svg>,
      <Svg key="folder" className="h-[19px] w-[22px]"><path d="M1 22V3h7l2 3h9v4" fill="#eee" /><path d="M1 22L7 9h16l-4 13z" fill="#fff" /></Svg>,
      <Svg key="palette"><path d="M2 2h20v20H2z" fill="#f2d648" /><path d="M5 5h9v4H5zM17 5h3v4h-3zM8 12v4H4v4h10v-4h-3v-4zM18 12v8" fill="#fff6c2" stroke="#222" strokeWidth="1.800" /></Svg>,
      <BallIcon key="ball" className="size-[18px]" />,
      <ListIcon key="list" />,
    ].map((icon, i) => (
      <div key={i} className={clsx("flex h-[30px] items-center justify-center border-b border-[#8a8a8a]", i === 0 ? "bg-white" : "bg-[#d6d6d6]")}>
        {icon}
      </div>
    ))}
  </div>
);

/* ---------- bottom of the window ---------- */

const navGlyphs = ["M6 3v18M19 3L8 12l11 9z", "M18 3L6 12l12 9z", "M6 3l12 9-12 9z", "M18 3v18M5 3l11 9-11 9z"];

const BottomTabs = () => (
  <div className="flex h-[21px] shrink-0 border-y border-[#808080] bg-[#f7f7f7] text-[15px]">
    <div className="ml-px flex w-[82px] bg-[#a9a7ba]">
      {navGlyphs.map((d) => (
        <Cell key={d} w="w-[20.5px]" className="border border-[#8987a0]">
          <Svg className="h-[11px] w-3"><path d={d} fill="#85839b" stroke="#85839b" strokeWidth="2" /></Svg>
        </Cell>
      ))}
    </div>
    <Cell w="w-[75px]" className="pl-1 font-bold tracking-[0.01em] text-black">Model</Cell>
    <Cell w="w-[89px]" className="border-l border-[#808080] bg-[#d3d3d3] pr-0.5 tracking-[0.01em] text-[#222]">3D Views</Cell>
    <Cell w="w-[150px]" className="border-x border-[#808080] bg-[#d3d3d3] pr-2 tracking-[-0.01em] text-[#222]">Hareket Etüdü 1</Cell>
  </div>
);

const StatusBar = () => (
  <div className="flex h-[21px] shrink-0 items-center bg-[#f8f8f8] text-[14.5px] tracking-[-0.008em] whitespace-nowrap text-[#1a1a1a]">
    <span className="ml-px pt-1">SOLIDWORKS Premium 2017 x64 Edition</span>
    <div className="ml-auto flex h-full items-center">
      <span className="w-[102px] pt-1">Under Defined</span>
      <i className="h-full w-2 border-x border-[#dcdcdc]" />
      <span className="w-[124px] pt-1 pl-1">Editing Assembly</span>
      <i className="h-full w-4 border-x border-[#dcdcdc]" />
      <span className="w-[108px] pt-1 pl-10 tracking-[-0.02em]">MMGS</span>
      <Caret className="rotate-180" />
      <Svg className="ml-[67px] h-[15px] w-[18px]"><path d="M1 8l9-6 12 4 1 5-7 11-6-1-9-8z" fill="#ddd" stroke="#444" strokeWidth="2" /><path d="M1 8l12 6 10-6M13 14l3 8" stroke="#444" strokeWidth="2" /><ellipse cx="11" cy="7" rx="3.500" ry="2" stroke="#444" /></Svg>
      <Svg className="mt-1.5 mr-px ml-3 size-3"><path d="M17 2h5M17 10h5M9 10h5M17 18h5M9 18h5M1 18h5" stroke="#b5b5b5" strokeWidth="5" /></Svg>
    </div>
  </div>
);

/* ---------- Windows taskbar ---------- */

const CaveArt = () => (
  <svg viewBox="0 0 90 47" className="h-[47px] w-[90px]">
    <defs>
      <clipPath id="cave"><path d="M2 36C0 26 10 20 26 10 40 2 56 0 70 2c14 2 19 18 18 30-1 8-12 8-22 12-10 3-32 4-44-1C12 40 4 42 2 36z" /></clipPath>
      <linearGradient id="sky" x1="0" x2="1"><stop offset="0" stopColor="#e08b66" /><stop offset=".55" stopColor="#e9eef4" /><stop offset="1" stopColor="#e0762f" /></linearGradient>
    </defs>
    <g clipPath="url(#cave)">
      <path d="M0 0h90v47H0z" fill="url(#sky)" />
      <path d="M0 30q22-6 45-2t45 0v19H0z" fill="#1d8296" />
      <path d="M38 22h14l5 25H33z" fill="#bfeef0" opacity=".6" />
      <path d="M0 36V16L30 0h60v36l-4-14-3 4-3-12-3 16-4-18-3 8-4-10-3 18-3-18-4 16-3-18-4 12-4-10-3 18-4-16-4 14-4-8-3 16-4-12-4 10-4-4-6 6z" fill="#4f3567" />
      <path d="M60 4h8l2 14-4-6-4 8zM32 10l6-4 2 12zM76 8l6 2-2 12z" fill="#a0628f" />
    </g>
  </svg>
);

const EdgeIcon = () => (
  <svg viewBox="0 0 30 30" className="size-[30px]">
    <circle cx="15" cy="15" r="14.500" fill="#1b74c4" />
    <path d="M1 13C3 4 10 .5 16 .5 25 .5 29.500 7 29.500 13c0 5-4 7-8 7-3 0-4-1-3-3 1-3-1-7-6-7-6 0-10 3-11.500 6z" fill="#37b8b0" />
    <path d="M18 1c8 1 11.500 7 11.500 12 0 5-4 7-8 7-3 0-4-1-3-3 4-5 3-12-.5-16z" fill="#62d06a" />
    <path d="M12 14c-4 6 1 13 9 13 3 0 5-1 7-3-6 2-12-1-12-6 0-2 2-3 1-5z" fill="#d3e7ef" />
  </svg>
);
const ExplorerIcon = () => (
  <svg viewBox="0 0 28 26" className="h-[25px] w-[28px]">
    <path d="M1 2h9l3 3h14v19H1z" fill="#e5a91f" />
    <path d="M1 8h26v16H1z" fill="#fcd75c" />
    <path d="M5 24v-9h18v9h-5v-5h-8v5z" fill="#3b8bd3" />
  </svg>
);
const StoreIcon = () => (
  <svg viewBox="0 0 30 30" className="size-[30px]">
    <path d="M10 8V3h10v5" fill="none" stroke="#3bb0e8" strokeWidth="2.500" />
    <rect x="1" y="7" width="28" height="22" rx="3" fill="#134a80" />
    <path d="M9 11h5.500v5.500H9z" fill="#f25022" /><path d="M15.500 11H21v5.500h-5.500z" fill="#7fba00" />
    <path d="M9 17.500h5.500V23H9z" fill="#00a4ef" /><path d="M15.500 17.500H21V23h-5.500z" fill="#ffb900" />
  </svg>
);
const MailIcon = () => (
  <svg viewBox="0 0 30 28" className="h-7 w-[30px]">
    <path d="M0 9L15 0l15 9v19H0z" fill="#0b4f8f" />
    <path d="M0 9l15 12L30 9v19H0z" fill="#1aa0e8" />
    <path d="M0 28l30-19v19z" fill="#1786d4" />
    <path d="M3 9h24L15 20z" fill="#f4f8fb" />
  </svg>
);
const CalcIcon = () => (
  <svg viewBox="0 0 24 30" className="h-[30px] w-6">
    <rect width="24" height="30" rx="1.500" fill="#6d7984" />
    <path d="M3 3h18v5H3z" fill="#4fc3f2" />
    <path d="M3 11h5v4H3zM9.500 11h5v4h-5zM16 11h5v4h-5zM3 17h5v4H3zM9.500 17h5v4h-5zM3 23h5v4H3zM9.500 23h5v4h-5z" fill="#e9edf0" />
    <path d="M16 17h5v10h-5z" fill="#173b69" />
  </svg>
);
const SwIcon = () => (
  <div className="relative h-[31px] w-[30px]">
    <svg viewBox="0 0 30 31" className="absolute inset-0">
      <path d="M1 5L15 0l14 5v20l-14 6L1 25z" fill="#b3121d" />
      <path d="M22 8l7-3v20l-7 3z" fill="#7d0c14" />
      <path d="M1 5l14-5 14 5-7 3z" fill="#dc4b50" />
    </svg>
    <span className="absolute inset-x-0 top-[6px] text-center text-[15px] leading-[16px] font-bold tracking-tight text-white">SW</span>
    <span className="absolute right-0 bottom-0 text-[8px] leading-[8px] font-bold text-white [text-shadow:0_0_2px_#000]">2017</span>
  </div>
);

const Taskbar = () => (
  <div className="flex h-[50px] shrink-0 items-center bg-linear-to-r from-[#cfe8f2] via-[#d0dfee] to-[#d6dcee] text-[#1a1a1a]">
    <Cell w="w-[60px]">
      <svg viewBox="0 0 20 20" className="size-5"><path d="M0 3l9-1.300V9.500H0zM10 1.500L20 0v9.500H10zM0 10.500h9v7.800L0 17zM10 10.500h10V20l-10-1.500z" fill="#000" /></svg>
    </Cell>
    <div className="flex h-full w-[360px] items-center border-x border-b border-[#c3c8cc] bg-[#fdfdfd]">
      <Svg className="ml-[14px] size-[21px] -scale-x-100"><circle cx="9.500" cy="9" r="7.500" strokeWidth="1.700" stroke="#222" /><path d="M14.500 14.500L23 23" strokeWidth="1.900" stroke="#222" /></Svg>
      <span className="ml-[14px] text-[17.5px] tracking-tight">Ara</span>
      <div className="mr-[6px] ml-auto"><CaveArt /></div>
    </div>
    <Cell w="w-[68px]"><EdgeIcon /></Cell>
    <Cell w="ml-[3px] w-[50px]" className="h-full border-b-3 border-[#1b6fb4] pb-1"><ExplorerIcon /></Cell>
    <Cell w="w-[72px]"><StoreIcon /></Cell>
    <Cell w="w-[54px]"><MailIcon /></Cell>
    <Cell w="w-[68px]"><CalcIcon /></Cell>
    <Cell w="w-[60px]" className="h-full border-b-3 border-[#1b6fb4] bg-[#eaf4fa] pr-1"><SwIcon /></Cell>
    <div className="ml-auto flex h-full items-center">
      <Cell w="w-[60px]">
        <svg viewBox="0 0 30 20" className="h-5 w-[30px]" fill="none" stroke="#111" strokeWidth="2">
          <path d="M1 1h24v18H3a2 2 0 0 1-2-2zM25 4h4v13a2 2 0 0 1-4 0M4 5h18M4 9.500h7v6H4zM14 9.500h8M14 13h8M14 16h8" />
        </svg>
      </Cell>
      <Cell w="w-[30px]"><Svg className="h-5 w-[17px]"><path d="M1 17L12 7l11 10" strokeWidth="1.900" stroke="#222" /></Svg></Cell>
      <Cell w="w-[31px]"><Svg className="h-[20px] w-4"><path d="M4 6h12v12H4zM16 10l6-3v10l-6-3M7 2q4-2 8 0M7 22q4 2 8 0" strokeWidth="1.700" /></Svg></Cell>
      <Cell w="w-7"><svg viewBox="0 0 20 12" className="h-3 w-5"><path d="M.5.500h17v11H.500z" fill="none" stroke="#111" /><path d="M2 2h12v8H2zM18 4h2v4h-2z" fill="#111" /></svg></Cell>
      <Cell w="w-8"><Svg className="size-[21px]"><circle cx="12" cy="12" r="10.500" /><ellipse cx="12" cy="12" rx="5" ry="10.500" /><path d="M2 8h20M2 16h13M12 1v22" /><circle cx="18" cy="18" r="5" fill="#d4dced" /><path d="M15 15l6 6" /></Svg></Cell>
      <Cell w="w-[30px]"><Svg className="h-5 w-[22px]"><path d="M0 9h3l5-5v16l-5-5H0zM13 9q2 3 0 6M17 6q4 6 0 12M21 4q5 8 0 16" strokeWidth="1.600" /></Svg></Cell>
      <div className="flex w-[86px] flex-col items-center text-[14.5px] leading-[23px] tracking-[-0.03em] whitespace-nowrap">
        <span>12:07</span>
        <span>19.01.2025</span>
      </div>
      <Cell w="w-[49px]"><Svg className="size-[21px]"><path d="M1 1h22v13M16 20h-5l-3 3-3-3H1V1" strokeWidth="1.700" /><path d="M21 13c1 5-2 7-6 8 5 2 9-2 6-8z" /></Svg></Cell>
      <i className="mr-[5px] ml-[10px] h-full w-px bg-[#b3bccb]" />
    </div>
  </div>
);

export default function App() {
  return (
    <div className="flex h-[1080px] w-[1920px] flex-col overflow-hidden bg-linear-to-r from-[#00a2e8] via-[#0669bd] via-50% to-[#062f96] font-['Open_Sans','Noto_Sans',sans-serif]">
      <div className="mx-[9px] mt-1 mb-[9px] flex h-[1017px] shrink-0 flex-col">
        <TitleBar />
        <Ribbon />
        <div className="relative flex h-[847px] shrink-0 flex-col bg-white">
          <div className="absolute inset-0 bg-[linear-gradient(to_bottom,transparent_48%,#fcfcfd_66%),radial-gradient(ellipse_30%_70%_at_82%_42%,#d3d7e4,transparent),radial-gradient(ellipse_20%_30%_at_24%_54%,#dde1ec,transparent),linear-gradient(to_right,transparent_60%,#eeeff4_76%)]" />
          <Scene />
          <TabRow />
          <div className="flex grow">
            <FeaturePanel />
            <TaskPane />
          </div>
          <Watermark />
        </div>
        <BottomTabs />
        <StatusBar />
      </div>
      <Taskbar />
    </div>
  );
}
